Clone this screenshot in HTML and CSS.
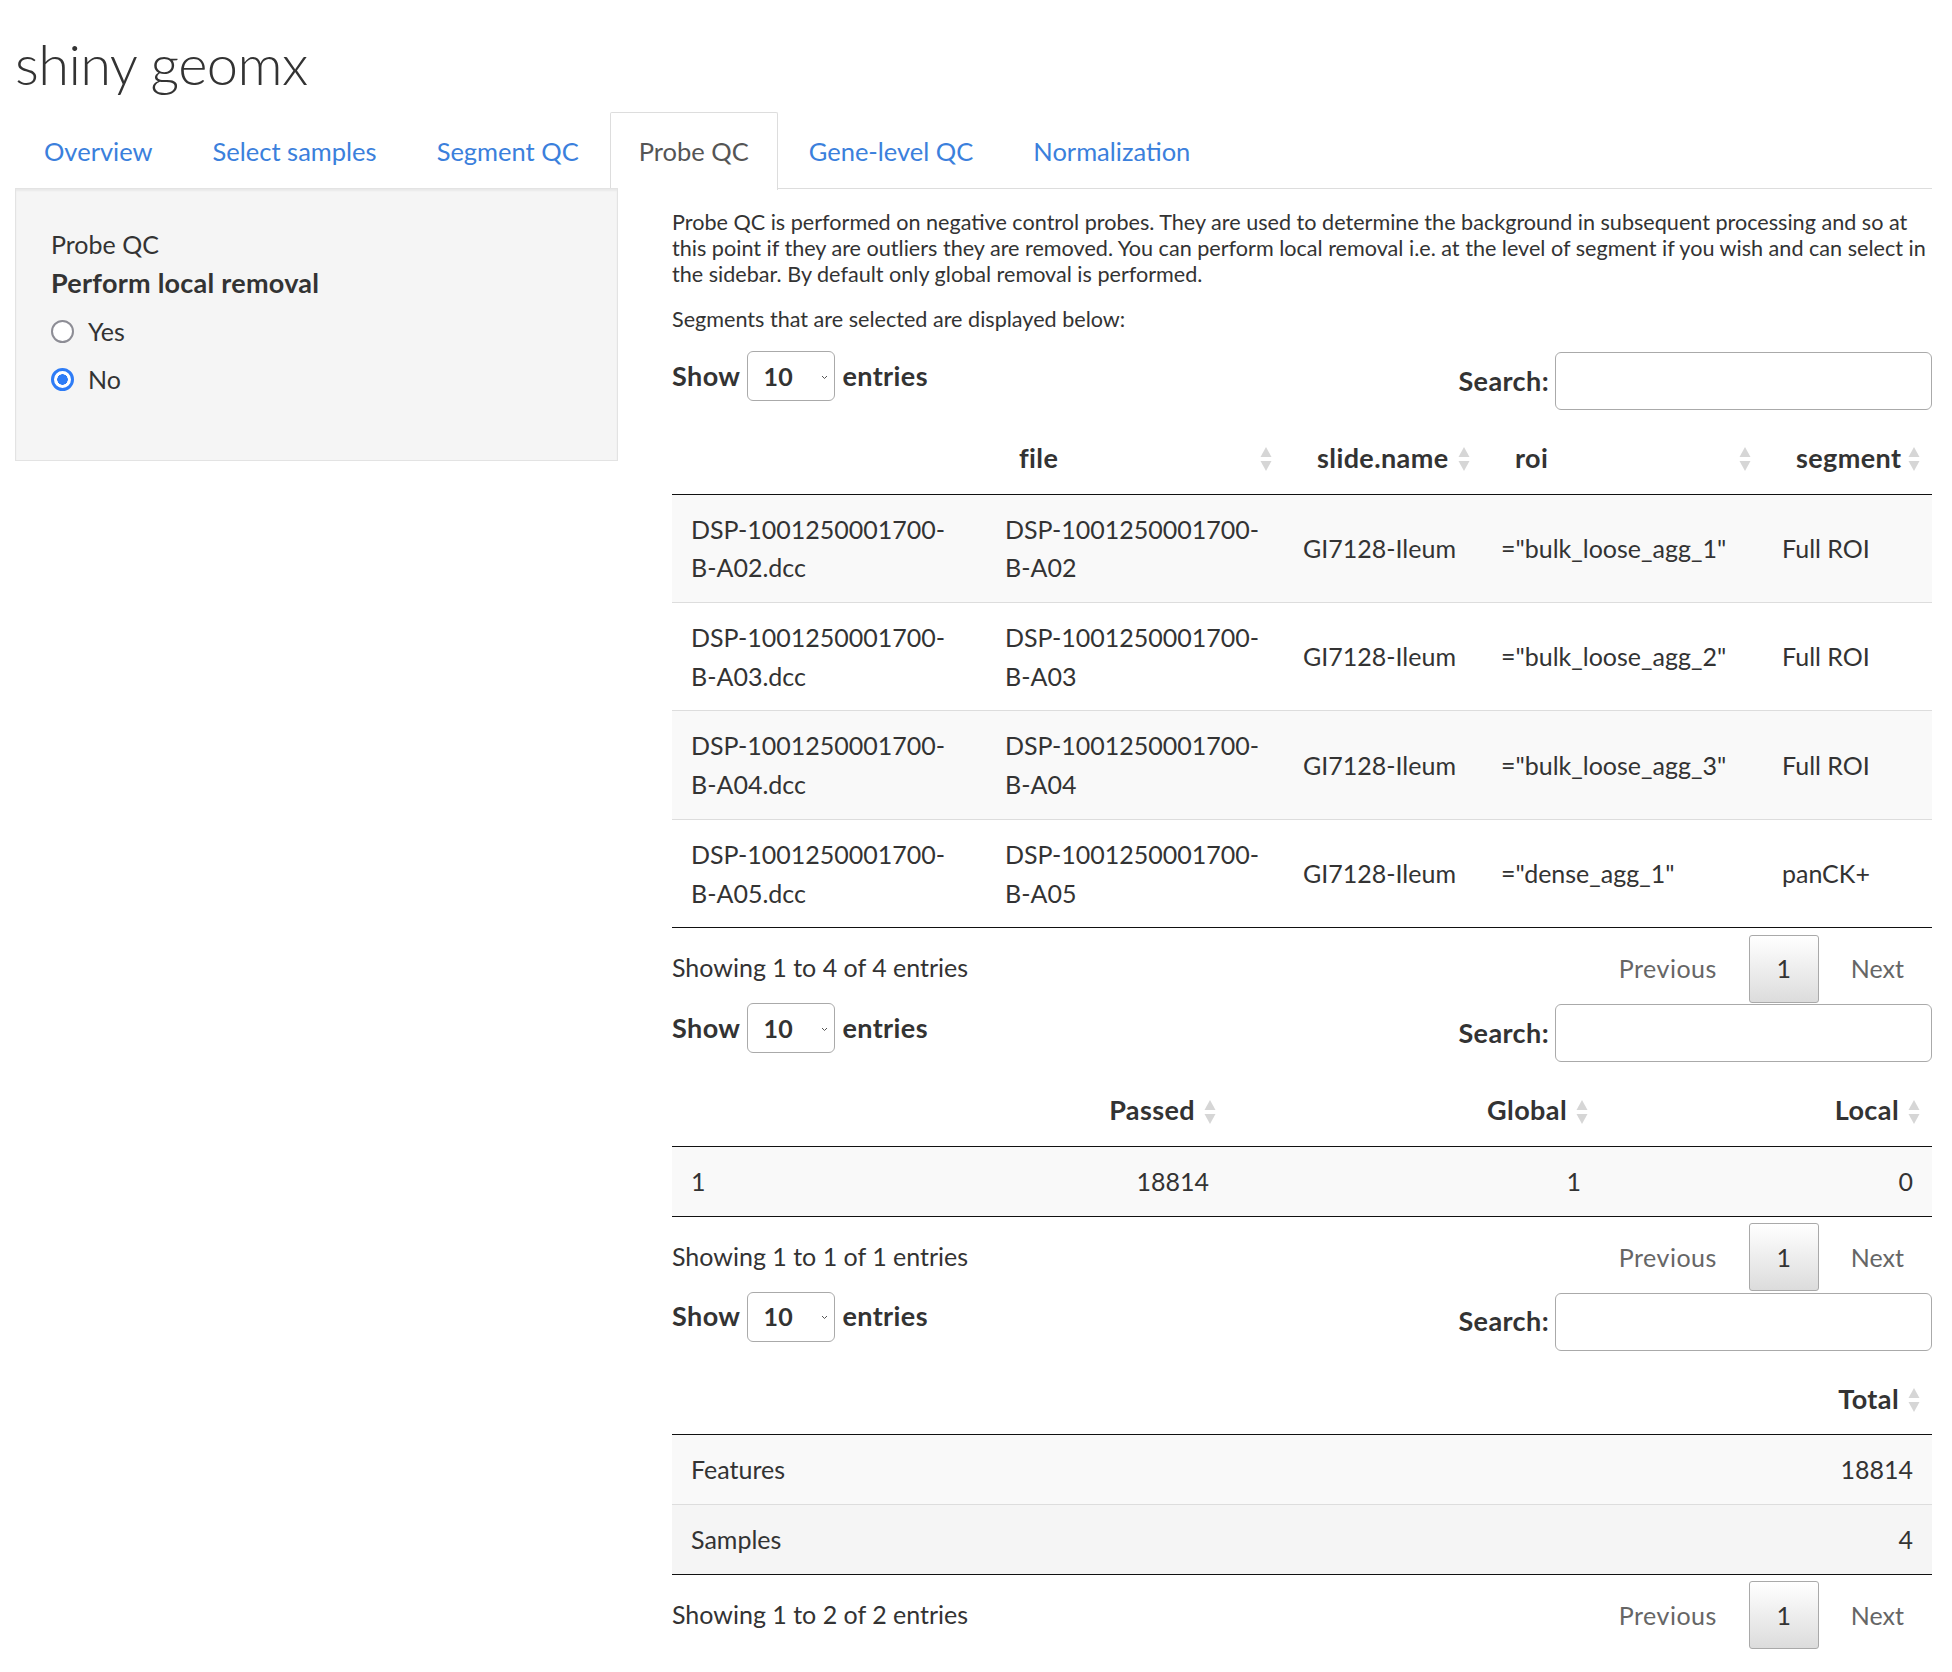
FILE: index.html
```html
<!DOCTYPE html>
<html>
<head>
<meta charset="utf-8">
<title>shiny geomx</title>
<link rel="stylesheet" href="styles.css">
</head>
<body>
<div class="page">
  <h1 class="title">shiny geomx</h1>
  <ul class="tabs">
    <li class="tab"><a>Overview</a></li>
    <li class="tab"><a>Select samples</a></li>
    <li class="tab"><a>Segment QC</a></li>
    <li class="tab active"><a>Probe QC</a></li>
    <li class="tab"><a>Gene-level QC</a></li>
    <li class="tab"><a>Normalization</a></li>
  </ul>
  <div class="layout">
    <aside class="well">
      <div class="well-title">Probe QC</div>
      <div class="well-label">Perform local removal</div>
      <div class="radio-row first"><span class="radio"></span><span>Yes</span></div>
      <div class="radio-row"><span class="radio checked"></span><span>No</span></div>
    </aside>
    <main class="main">
      <p class="intro">Probe QC is performed on negative control probes. They are used to determine the background in subsequent processing and so at this point if they are outliers they are removed. You can perform local removal i.e. at the level of segment if you wish and can select in the sidebar. By default only global removal is performed.</p>
      <p class="intro second">Segments that are selected are displayed below:</p>

      <div class="dt">
        <div class="controls">
          <div class="length">Show <span class="select">10<svg class="chev" width="7" height="5" viewBox="0 0 7 5"><path d="M1 1 L3.5 3.5 L6 1" fill="none" stroke="#555" stroke-width="1"/></svg></span> entries</div>
          <div class="search">Search: <span class="input"></span></div>
        </div>
        <table class="table t1">
          <thead>
            <tr>
              <th class="w-c1"></th>
              <th class="w-c2 sortable">file<svg class="sort" width="14" height="28" viewBox="0 0 14 28"><path d="M7 2 L12.5 12 L1.5 12 Z" fill="#d6d6d6"/><path d="M7 26 L12.5 16 L1.5 16 Z" fill="#d6d6d6"/></svg></th>
              <th class="w-c3 sortable">slide.name<svg class="sort" width="14" height="28" viewBox="0 0 14 28"><path d="M7 2 L12.5 12 L1.5 12 Z" fill="#d6d6d6"/><path d="M7 26 L12.5 16 L1.5 16 Z" fill="#d6d6d6"/></svg></th>
              <th class="w-c4 sortable">roi<svg class="sort" width="14" height="28" viewBox="0 0 14 28"><path d="M7 2 L12.5 12 L1.5 12 Z" fill="#d6d6d6"/><path d="M7 26 L12.5 16 L1.5 16 Z" fill="#d6d6d6"/></svg></th>
              <th class="w-c5 sortable">segment<svg class="sort" width="14" height="28" viewBox="0 0 14 28"><path d="M7 2 L12.5 12 L1.5 12 Z" fill="#d6d6d6"/><path d="M7 26 L12.5 16 L1.5 16 Z" fill="#d6d6d6"/></svg></th>
            </tr>
          </thead>
          <tbody>
            <tr class="odd"><td>DSP-1001250001700-B-A02.dcc</td><td>DSP-1001250001700-B-A02</td><td>GI7128-Ileum</td><td>="bulk_loose_agg_1"</td><td>Full ROI</td></tr>
            <tr><td>DSP-1001250001700-B-A03.dcc</td><td>DSP-1001250001700-B-A03</td><td>GI7128-Ileum</td><td>="bulk_loose_agg_2"</td><td>Full ROI</td></tr>
            <tr class="odd"><td>DSP-1001250001700-B-A04.dcc</td><td>DSP-1001250001700-B-A04</td><td>GI7128-Ileum</td><td>="bulk_loose_agg_3"</td><td>Full ROI</td></tr>
            <tr><td>DSP-1001250001700-B-A05.dcc</td><td>DSP-1001250001700-B-A05</td><td>GI7128-Ileum</td><td>="dense_agg_1"</td><td>panCK+</td></tr>
          </tbody>
        </table>
        <div class="footer">
          <div class="info">Showing 1 to 4 of 4 entries</div>
          <div class="paginate"><span class="pbtn prev">Previous</span><span class="pcur">1</span><span class="pbtn">Next</span></div>
        </div>
      </div>

      <div class="dt">
        <div class="controls">
          <div class="length">Show <span class="select">10<svg class="chev" width="7" height="5" viewBox="0 0 7 5"><path d="M1 1 L3.5 3.5 L6 1" fill="none" stroke="#555" stroke-width="1"/></svg></span> entries</div>
          <div class="search">Search: <span class="input"></span></div>
        </div>
        <table class="table t2">
          <thead>
            <tr>
              <th class="w-d1"></th>
              <th class="w-d2 sortable num">Passed<svg class="sort" width="14" height="28" viewBox="0 0 14 28"><path d="M7 2 L12.5 12 L1.5 12 Z" fill="#d6d6d6"/><path d="M7 26 L12.5 16 L1.5 16 Z" fill="#d6d6d6"/></svg></th>
              <th class="w-d3 sortable num">Global<svg class="sort" width="14" height="28" viewBox="0 0 14 28"><path d="M7 2 L12.5 12 L1.5 12 Z" fill="#d6d6d6"/><path d="M7 26 L12.5 16 L1.5 16 Z" fill="#d6d6d6"/></svg></th>
              <th class="w-d4 sortable num">Local<svg class="sort" width="14" height="28" viewBox="0 0 14 28"><path d="M7 2 L12.5 12 L1.5 12 Z" fill="#d6d6d6"/><path d="M7 26 L12.5 16 L1.5 16 Z" fill="#d6d6d6"/></svg></th>
            </tr>
          </thead>
          <tbody>
            <tr class="odd"><td>1</td><td class="num">18814</td><td class="num">1</td><td class="num">0</td></tr>
          </tbody>
        </table>
        <div class="footer">
          <div class="info">Showing 1 to 1 of 1 entries</div>
          <div class="paginate"><span class="pbtn prev">Previous</span><span class="pcur">1</span><span class="pbtn">Next</span></div>
        </div>
      </div>

      <div class="dt">
        <div class="controls">
          <div class="length">Show <span class="select">10<svg class="chev" width="7" height="5" viewBox="0 0 7 5"><path d="M1 1 L3.5 3.5 L6 1" fill="none" stroke="#555" stroke-width="1"/></svg></span> entries</div>
          <div class="search">Search: <span class="input"></span></div>
        </div>
        <table class="table t3">
          <thead>
            <tr>
              <th class="w-e1"></th>
              <th class="w-e2 sortable num">Total<svg class="sort" width="14" height="28" viewBox="0 0 14 28"><path d="M7 2 L12.5 12 L1.5 12 Z" fill="#d6d6d6"/><path d="M7 26 L12.5 16 L1.5 16 Z" fill="#d6d6d6"/></svg></th>
            </tr>
          </thead>
          <tbody>
            <tr class="odd"><td>Features</td><td class="num">18814</td></tr>
            <tr class="hover"><td>Samples</td><td class="num">4</td></tr>
          </tbody>
        </table>
        <div class="footer">
          <div class="info">Showing 1 to 2 of 2 entries</div>
          <div class="paginate"><span class="pbtn prev">Previous</span><span class="pcur">1</span><span class="pbtn">Next</span></div>
        </div>
      </div>
    </main>
  </div>
</div>
</body>
</html>
```
FILE: styles.css
```css
* { box-sizing: border-box; }
html, body { margin: 0; padding: 0; background: #fff; }
body {
  font-family: Lato, "Noto Sans", sans-serif;
  color: #333;
  font-size: 25px;
  line-height: 38.6px;
}
.page { padding: 0 20px 0 15px; }

.title {
  margin: 0;
  padding-top: 32px;
  font-size: 56px;
  font-weight: 300;
  line-height: 64px;
  height: 112px;
  color: #333;
  letter-spacing: -0.6px;
}

.tabs {
  list-style: none;
  margin: 0;
  padding: 0;
  display: flex;
  border-bottom: 1px solid #ddd;
  height: 77px;
}
.tab { margin-right: 2px; }
.tab a {
  display: block;
  padding: 19px 28px;
  height: 78px;
  font-size: 25.5px;
  color: #3b80dc;
  border: 1px solid transparent;
  border-bottom: none;
}
.tab.active a {
  color: #555;
  background: #fff;
  border-color: #ddd;
  border-radius: 2px 2px 0 0;
}

.layout {
  display: flex;
  gap: 54px;
  align-items: flex-start;
}
.well {
  flex: 0 0 603px;
  height: 273px;
  background: #f5f5f5;
  border: 1px solid #e3e3e3;
  box-shadow: inset 0 2px 2px rgba(0,0,0,0.05);
  padding: 36px 35px;
  position: relative;
  z-index: 1;
  margin-top: -1px;
}
.well-title { line-height: 38px; }
.well-label {
  font-weight: 700;
  font-size: 27px;
  letter-spacing: 0.25px;
  line-height: 40px;
}
.radio-row {
  display: flex;
  align-items: center;
  gap: 14px;
  height: 48px;
}
.radio-row.first { margin-top: 4px; }
.radio {
  width: 23px;
  height: 23px;
  border-radius: 50%;
  border: 2.5px solid #8d8d95;
  background: #fff;
  flex: 0 0 23px;
}
.radio.checked {
  border: 3px solid #2e7cf6;
  background: radial-gradient(circle, #2e7cf6 0, #2e7cf6 5px, #fff 5.5px);
}

.main { flex: 1 1 auto; padding-top: 20px; min-width: 0; }
.intro {
  margin: 0 0 19px;
  font-size: 21.6px;
  line-height: 26px;
}

.controls {
  display: flex;
  justify-content: space-between;
  align-items: flex-start;
  font-weight: 700;
  font-size: 27px;
  letter-spacing: 0.4px;
}
.length {
  display: flex;
  align-items: center;
  gap: 7px;
  height: 50px;
}
.select {
  display: inline-flex;
  align-items: center;
  justify-content: space-between;
  width: 88px;
  height: 50px;
  border: 1px solid #aaa;
  border-radius: 6px;
  padding: 0 6px 0 15px;
  background: #fff;
  font-size: 25px;
}
.chev { margin-top: 2px; }
.search {
  display: flex;
  align-items: center;
  gap: 6px;
  height: 58px;
  padding-top: 2px;
}
.input {
  display: block;
  width: 377px;
  height: 58px;
  border: 1px solid #aaa;
  border-radius: 6px;
  background: #fff;
}

.table {
  width: 100%;
  table-layout: fixed;
  border-collapse: separate;
  border-spacing: 0;
  margin-top: 16px;
  border-bottom: 1px solid #111;
}
.table th {
  text-align: left;
  font-weight: 700;
  font-size: 27px;
  letter-spacing: 0.4px;
  padding: 14px 33px 16px 33px;
  border-bottom: 1px solid #111;
  position: relative;
  white-space: nowrap;
}
.table th.num, .table td.num { text-align: right; }
.sort {
  position: absolute;
  right: 11px;
  top: 50%;
  margin-top: -14px;
}
.table td {
  padding: 15px 19px;
  line-height: 38.7px;
  border-top: 1px solid #ddd;
  vertical-align: middle;
}
.table tbody tr:first-child td { border-top: none; }
.table tr.odd td { background: #f9f9f9; }
.table tr.hover td { background: #f5f5f5; }

.w-c1 { width: 314px; }
.w-c2 { width: 298px; }
.w-c3 { width: 198px; }
.w-c4 { width: 281px; }
.w-c5 { width: 169px; }

.w-d1 { width: 340px; }
.w-d2 { width: 216px; }
.w-d3 { width: 372px; }
.w-d4 { width: 332px; }

.w-e1 { width: 1110px; }
.w-e2 { width: 150px; }

.footer {
  display: flex;
  justify-content: space-between;
  align-items: center;
  padding-top: 6px;
  height: 75px;
}
.info { margin-top: -2px; }
.paginate {
  display: flex;
  align-items: center;
  height: 68px;
}
.pbtn {
  color: #666;
  padding: 0 28px;
  margin-left: 4px;
}
.pbtn.prev { letter-spacing: 0.5px; }
.pcur {
  display: flex;
  align-items: center;
  justify-content: center;
  width: 70px;
  height: 68px;
  margin-left: 4px;
  border: 1px solid #a9a9a9;
  border-radius: 3px;
  background: linear-gradient(to bottom, #ffffff 0%, #dcdcdc 100%);
  color: #333;
}
```
